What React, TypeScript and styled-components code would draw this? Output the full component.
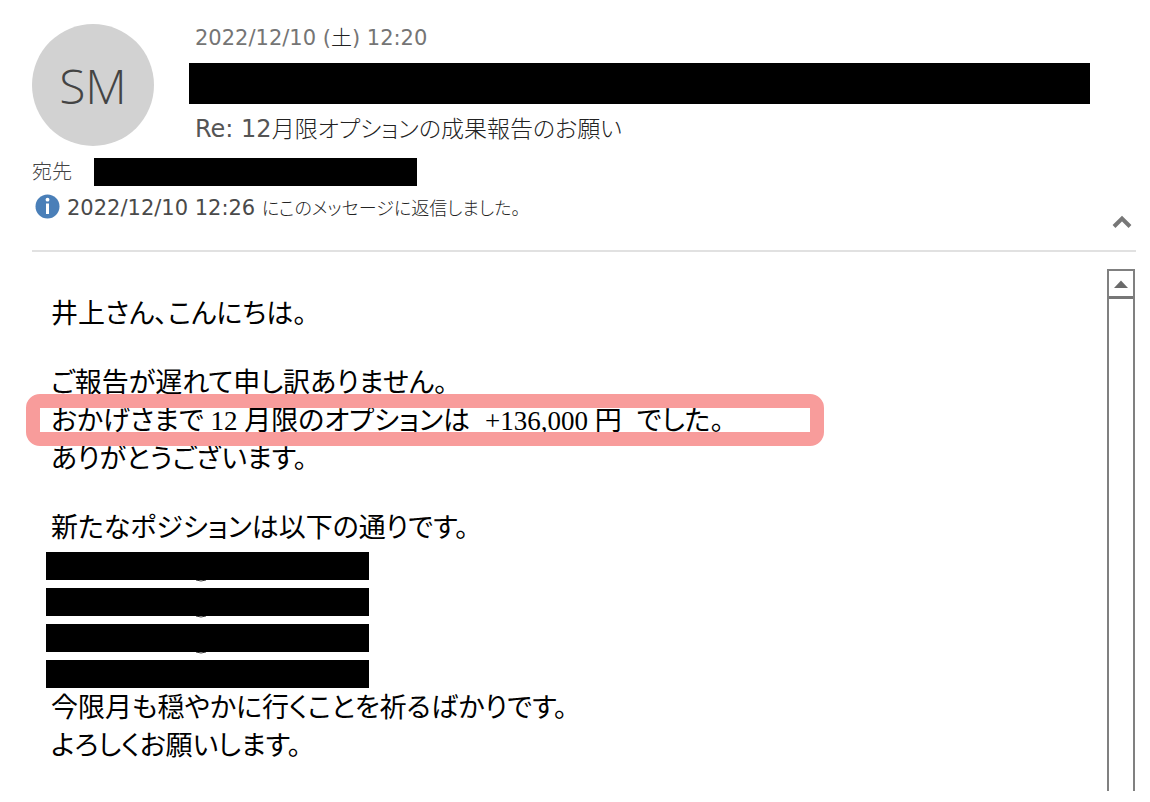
import React from "react";
import styled, { createGlobalStyle } from "styled-components";

const GlobalStyle = createGlobalStyle`
  *, *::before, *::after { box-sizing: border-box; }
  body { margin: 0; background: #fff; }
  p, h1 { margin: 0; padding: 0; font-weight: inherit; }
`;

const uiFont = `"DejaVu Sans", "Noto Sans CJK JP", sans-serif`;

const Window = styled.main`
  display: flex;
  flex-direction: column;
  min-height: 100vh;
  padding: 24px 14px 11px 32px;
  font-family: ${uiFont};
  font-feature-settings: "palt";
  color: #4a4a4a;
`;

const Header = styled.header`
  display: flex;
  flex-direction: column;
  padding-bottom: 21px;
  border-bottom: 2px solid #e1e1e1;
`;

const Sender = styled.div`
  display: flex;
  gap: 35px;
`;

const Avatar = styled.div`
  display: flex;
  flex: none;
  align-items: center;
  justify-content: center;
  width: 122px;
  height: 122px;
  border-radius: 50%;
  background: #d2d2d2;
  color: #444;
  font: 300 48px "Open Sans", sans-serif;
`;

const SenderDetails = styled.div`
  display: flex;
  flex: 1;
  flex-direction: column;
  padding-right: 46px;
`;

const Sent = styled.time`
  padding-left: 6px;
  color: #757575;
  font-size: 21px;
  line-height: 28px;
  margin-bottom: 11px;
`;

const Light = styled.span<{ $size: number }>`
  color: #222;
  font-size: ${(p) => p.$size}px;
  font-weight: 300;
`;

const Redaction = styled.div<{ $width?: number; $height?: number }>`
  position: relative;
  width: ${(p) => (p.$width ? `${p.$width}px` : "100%")};
  height: ${(p) => p.$height ?? 28}px;
  background: #000;
`;

const Subject = styled.h1`
  padding: 9px 0 0 6px;
  color: #555;
  font-size: 24px;
  line-height: 32px;
`;

const Recipients = styled.div`
  display: flex;
  align-items: center;
  gap: 21px;
  margin-top: 12px;
  color: #444;
  font-size: 20px;
  font-weight: 300;
  line-height: 28px;
`;

const RecipientLabel = styled.span`
  width: 41px;
`;

const StatusRow = styled.div`
  display: flex;
  align-items: flex-start;
  justify-content: space-between;
  padding: 8px 4px 0 3px;
`;

const Status = styled.p`
  display: flex;
  align-items: flex-start;
  gap: 7px;
  font-size: 21px;
  line-height: 28px;
`;

const IconButton = styled.button`
  display: flex;
  padding: 0;
  margin-top: 21px;
  border: 0;
  background: none;
`;

const Content = styled.div`
  display: flex;
  flex: 1;
  justify-content: space-between;
  padding: 17px 1px 0 0;
`;

const Body = styled.article`
  padding: 26px 0 0 19px;
  color: #000;
  font-family: "Liberation Serif", "Noto Sans CJK JP", serif;
  font-size: 27px;
  line-height: 38px;
`;

const Paragraph = styled.div<{ $last?: boolean }>`
  margin-bottom: ${(p) => (p.$last ? 0 : 31)}px;
`;

const Highlighted = styled.p`
  position: relative;
  white-space: pre;
`;

const WideSpace = styled.span`
  font-size: 15px;
  line-height: 1;
`;

const HighlightFrame = styled.span`
  position: absolute;
  top: -8px;
  left: -25px;
  width: 798px;
  height: 52px;
  border: 14px solid #f89c9b;
  border-radius: 14px;
`;

const Positions = styled.div`
  display: flex;
  flex-direction: column;
  gap: 8px;
  margin: 5px 0 1px -5px;
`;

const Remnant = styled.svg`
  position: absolute;
  top: 100%;
  left: 148px;
`;

const Scrollbar = styled.div`
  display: flex;
  flex-direction: column;
  flex: none;
  width: 28px;
  border: 2px solid #808080;
  border-bottom: 0;
`;

const ScrollUp = styled.button`
  display: flex;
  align-items: center;
  justify-content: center;
  height: 28px;
  padding: 0;
  border: 0;
  border-bottom: 3px solid #777;
  background: #fff;
`;

function RedactedPosition({ remnant }: { remnant?: boolean }) {
  return (
    <Redaction $width={323}>
      {remnant && (
        <Remnant width="14" height="2" viewBox="0 0 14 2" aria-hidden="true">
          <path d="M2 0Q7 2 12 0" fill="none" stroke="#333" />
        </Remnant>
      )}
    </Redaction>
  );
}

export default function App() {
  return (
    <>
      <GlobalStyle />
      <Window>
        <Header>
          <Sender>
            <Avatar>SM</Avatar>
            <SenderDetails>
              <Sent dateTime="2022-12-10T12:20">
                2022/12/10 (<Light $size={21}>土</Light>) 12:20
              </Sent>
              <Redaction $height={41} />
              <Subject>
                Re: 12<Light $size={23}>月限オプションの成果報告のお願い</Light>
              </Subject>
            </SenderDetails>
          </Sender>
          <Recipients>
            <RecipientLabel>宛先</RecipientLabel>
            <Redaction $width={323} />
          </Recipients>
          <StatusRow>
            <Status>
              <svg width="25" height="25" viewBox="0 0 25 25" aria-hidden="true">
                <circle cx="12.5" cy="12.5" r="12" fill="#4a7fb8" />
                <circle cx="12.5" cy="5.7" r="1.9" fill="#fff" />
                <path d="M11 9.5h3v10.5h-3z" fill="#fff" />
              </svg>
              <span>
                2022/12/10 12:26 <Light $size={18}>にこのメッセージに返信しました。</Light>
              </span>
            </Status>
            <IconButton aria-label="ヘッダーを折りたたむ">
              <svg width="20" height="14" viewBox="0 0 20 14">
                <path d="M2 11.5L10 3.5L18 11.5" fill="none" stroke="#777" strokeWidth="4" />
              </svg>
            </IconButton>
          </StatusRow>
        </Header>
        <Content>
          <Body>
            <Paragraph>
              <p>井上さん、こんにちは。</p>
            </Paragraph>
            <Paragraph>
              <p>ご報告が遅れて申し訳ありません。</p>
              <Highlighted>
                おかげさまで 12 月限のオプションは<WideSpace>　</WideSpace>+136,000 円
                <WideSpace>　</WideSpace>でした。
                <HighlightFrame />
              </Highlighted>
              <p>ありがとうございます。</p>
            </Paragraph>
            <Paragraph $last>
              <p>新たなポジションは以下の通りです。</p>
              <Positions>
                <RedactedPosition remnant />
                <RedactedPosition remnant />
                <RedactedPosition remnant />
                <RedactedPosition />
              </Positions>
              <p>今限月も穏やかに行くことを祈るばかりです。</p>
              <p>よろしくお願いします。</p>
            </Paragraph>
          </Body>
          <Scrollbar>
            <ScrollUp aria-label="上へスクロール">
              <svg width="14" height="8" viewBox="0 0 14 8">
                <path d="M0 8L7 0.5L14 8z" fill="#6a6a6a" />
              </svg>
            </ScrollUp>
          </Scrollbar>
        </Content>
      </Window>
    </>
  );
}
